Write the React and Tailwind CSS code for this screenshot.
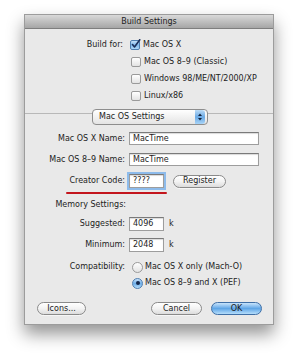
import React from "react";

/* ================= SMALL CONTROLS ================= */
function Checkbox({ checked }) {
  if (checked) {
    return (
      <svg width="11" height="11" viewBox="0 0 11 11" className="shrink-0">
        <defs>
          <linearGradient id="cbBlue" x1="0" y1="0" x2="0" y2="1">
            <stop offset="0" stopColor="#cfe6fa" />
            <stop offset="0.5" stopColor="#7fb8ec" />
            <stop offset="1" stopColor="#b4dcfa" />
          </linearGradient>
        </defs>
        <rect x="0.5" y="1.5" width="9" height="9" rx="1.5" fill="url(#cbBlue)" stroke="#4f7eb0" />
        <path d="M2.5 5.5 L4.5 8 L9.8 0.8" fill="none" stroke="#1b2f5a" strokeWidth="1.6" strokeLinecap="round" strokeLinejoin="round" />
      </svg>
    );
  }
  return (
    <div className="w-[10px] h-[10px] shrink-0 rounded-[2px] border border-[#9a9a9a] bg-gradient-to-b from-white to-[#e3e3e3]" />
  );
}

function Radio({ checked }) {
  if (checked) {
    return (
      <div className="w-[11px] h-[11px] shrink-0 rounded-full border border-[#4f7eb0] bg-gradient-to-b from-[#c7e2fa] via-[#6eaee8] to-[#b2dbfa] flex items-center justify-center">
        <div className="w-[4px] h-[4px] rounded-full bg-[#14264a]" />
      </div>
    );
  }
  return (
    <div className="w-[11px] h-[11px] shrink-0 rounded-full border border-[#9a9a9a] bg-gradient-to-b from-white to-[#e3e3e3]" />
  );
}

function Field({ value, width, focus }) {
  return (
    <div
      className={`h-full ${width} bg-white border border-[#9d9d9d] border-t-[#7a7a7a] flex items-center pl-[3px] shadow-[inset_0_1px_1px_rgba(0,0,0,0.15)] ${
        focus ? "ring-[2px] ring-[#8dbbeb]" : ""
      }`}
    >
      {value}
    </div>
  );
}

function PillButton({ children, width }) {
  return (
    <div
      className={`h-[13px] ${width} rounded-full border border-[#8a8a8a] bg-gradient-to-b from-white via-[#f3f3f3] to-[#dcdcdc] flex items-center justify-center shadow-[0_1px_0_rgba(255,255,255,0.6)]`}
    >
      {children}
    </div>
  );
}

export default function App() {
  return (
    <div className="w-[300px] h-[361px] bg-white pt-[14px] font-['DejaVu_Sans',sans-serif] text-[8px] leading-none text-[#1c1c1c]">
      {/* WINDOW */}
      <div className="ml-[24px] w-[250px] h-[311px] flex flex-col border border-[#9c9c9c] shadow-[0_9px_16px_rgba(0,0,0,0.42)]">
        {/* TITLE BAR */}
        <div className="h-[14px] shrink-0 bg-gradient-to-b from-[#d9d9d9] to-[#a6a6a6] border-b border-[#7e7e7e] flex items-center justify-center text-[#222]">
          Build Settings
        </div>

        {/* BODY */}
        <div className="flex-1 bg-[#e9e9e9] flex flex-col pt-[7px]">
          {/* BUILD FOR */}
          <div className="flex items-center h-[17px]">
            <div className="w-[98px] text-right">Build for:</div>
            <div className="ml-[7px]">
              <Checkbox checked />
            </div>
            <div className="ml-[2px]">Mac OS X</div>
          </div>
          {["Mac OS 8–9 (Classic)", "Windows 98/ME/NT/2000/XP", "Linux/x86"].map((t) => (
            <div key={t} className="flex items-center h-[17px]">
              <div className="w-[98px]" />
              <div className="ml-[8px]">
                <Checkbox />
              </div>
              <div className="ml-[3px]">{t}</div>
            </div>
          ))}

          {/* SEPARATOR + POPUP */}
          <div className="mt-[9px] border-t border-[#b8b8b8]" />
          <div className="mt-[-5px] ml-[67px] w-[116px] h-[16px] rounded-[4px] border border-[#8e8e8e] bg-gradient-to-b from-white to-[#e4e4e4] flex items-center">
            <div className="flex-1 pl-[6px]">Mac OS Settings</div>
            <div className="w-[10px] h-full mr-[2px] rounded-r-[3px] bg-gradient-to-b from-[#bcdcf7] via-[#6aa9e4] to-[#a8d4f7] flex items-center justify-center">
              <svg width="6" height="10" viewBox="0 0 6 10">
                <path d="M1 4 L3 1.5 L5 4 Z" fill="#12233f" />
                <path d="M1 6 L3 8.5 L5 6 Z" fill="#12233f" />
              </svg>
            </div>
          </div>

          {/* NAMES */}
          <div className="mt-[7px] flex items-center h-[13px]">
            <div className="w-[100px] text-right">Mac OS X Name:</div>
            <div className="ml-[4px] h-full">
              <Field value="MacTime" width="w-[130px]" />
            </div>
          </div>
          <div className="mt-[8px] flex items-center h-[13px]">
            <div className="w-[100px] text-right">Mac OS 8–9 Name:</div>
            <div className="ml-[4px] h-full">
              <Field value="MacTime" width="w-[130px]" />
            </div>
          </div>

          {/* CREATOR CODE */}
          <div className="mt-[8px] flex items-center h-[14px]">
            <div className="w-[100px] text-right">Creator Code:</div>
            <div className="ml-[4px] h-full">
              <Field value="????" width="w-[35px]" focus />
            </div>
            <div className="ml-[9px]">
              <PillButton width="w-[53px]">Register</PillButton>
            </div>
          </div>
          <div className="mt-[4px] ml-[41px] w-[101px] h-[2px] rounded-full bg-[#c3161d]" />

          {/* MEMORY */}
          <div className="mt-[5px] flex items-center h-[12px]">
            <div className="w-[101px] text-right">Memory Settings:</div>
          </div>
          <div className="mt-[6px] flex items-center h-[14px]">
            <div className="w-[100px] text-right">Suggested:</div>
            <div className="ml-[4px] h-full">
              <Field value="4096" width="w-[35px]" />
            </div>
            <div className="ml-[5px]">k</div>
          </div>
          <div className="mt-[7px] flex items-center h-[14px]">
            <div className="w-[100px] text-right">Minimum:</div>
            <div className="ml-[4px] h-full">
              <Field value="2048" width="w-[35px]" />
            </div>
            <div className="ml-[5px]">k</div>
          </div>

          {/* COMPATIBILITY */}
          <div className="mt-[8px] flex items-center h-[14px]">
            <div className="w-[100px] text-right">Compatibility:</div>
            <div className="ml-[7px]">
              <Radio />
            </div>
            <div className="ml-[2px]">Mac OS X only (Mach-O)</div>
          </div>
          <div className="mt-[2px] flex items-center h-[14px]">
            <div className="w-[100px]" />
            <div className="ml-[7px]">
              <Radio checked />
            </div>
            <div className="ml-[2px]">Mac OS 8–9 and X (PEF)</div>
          </div>

          {/* BUTTONS */}
          <div className="mt-[12px] flex items-center pl-[12px] pr-[11px]">
            <PillButton width="w-[49px]">Icons...</PillButton>
            <div className="ml-auto">
              <PillButton width="w-[51px]">Cancel</PillButton>
            </div>
            <div className="ml-[9px] w-[51px] h-[13px] rounded-full border border-[#3f6fa6] bg-gradient-to-b from-[#c8e4fb] via-[#5fa6e6] to-[#b4ddfb] flex items-center justify-center">
              OK
            </div>
          </div>
        </div>
      </div>
    </div>
  );
}
